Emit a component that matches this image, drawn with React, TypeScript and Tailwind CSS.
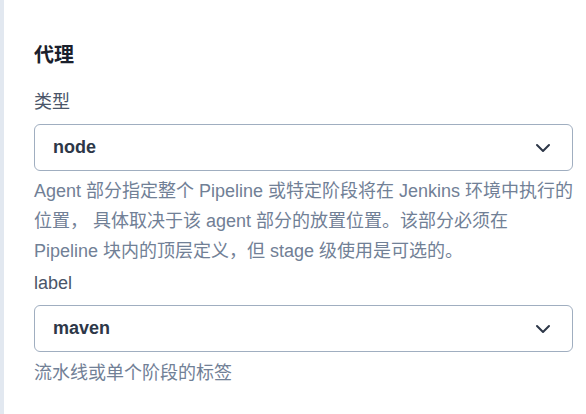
import React from 'react';
import { ChevronDown } from 'lucide-react';

const font = { fontFamily: '"Liberation Sans", "Noto Sans CJK SC", sans-serif' };

const Select: React.FC<{ value: string }> = ({ value }) => (
  <div className="h-[47px] border border-[#a0aec0] rounded-md bg-white flex items-center justify-between pl-[18px] pr-[17px]">
    <span className="font-bold text-[18px] text-[#2d3748]">{value}</span>
    <ChevronDown className="w-6 h-6 text-[#2d3748]" strokeWidth={2} />
  </div>
);

export default function App() {
  return (
    <div className="flex w-[586px] h-[414px] bg-white overflow-hidden" style={font}>
      <div className="w-[4px] bg-[#e2e8f0] shrink-0" />
      <div className="flex-1 pl-[30px] pr-[13px] pt-[42px]">
        <h2 className="text-[20px] leading-[27px] font-bold text-[#1a202c]">代理</h2>
        <div className="mt-[19px] text-[18px] leading-[28px] text-[#4a5568]">类型</div>
        <div className="mt-[8px]">
          <Select value="node" />
        </div>
        <p className="mt-[5px] text-[18px] leading-[30px] text-[#718096]">
          <span className="block whitespace-nowrap">Agent 部分指定整个 Pipeline 或特定阶段将在 Jenkins 环境中执行的</span>
          <span className="block whitespace-nowrap">位置， 具体取决于该 agent 部分的放置位置。该部分必须在</span>
          <span className="block whitespace-nowrap">Pipeline 块内的顶层定义，但 stage 级使用是可选的。</span>
        </p>
        <div className="mt-[3px] text-[18px] leading-[28px] text-[#4a5568]">label</div>
        <div className="mt-[8px]">
          <Select value="maven" />
        </div>
        <p className="mt-[6px] text-[18px] leading-[30px] text-[#718096]">流水线或单个阶段的标签</p>
      </div>
    </div>
  );
}
